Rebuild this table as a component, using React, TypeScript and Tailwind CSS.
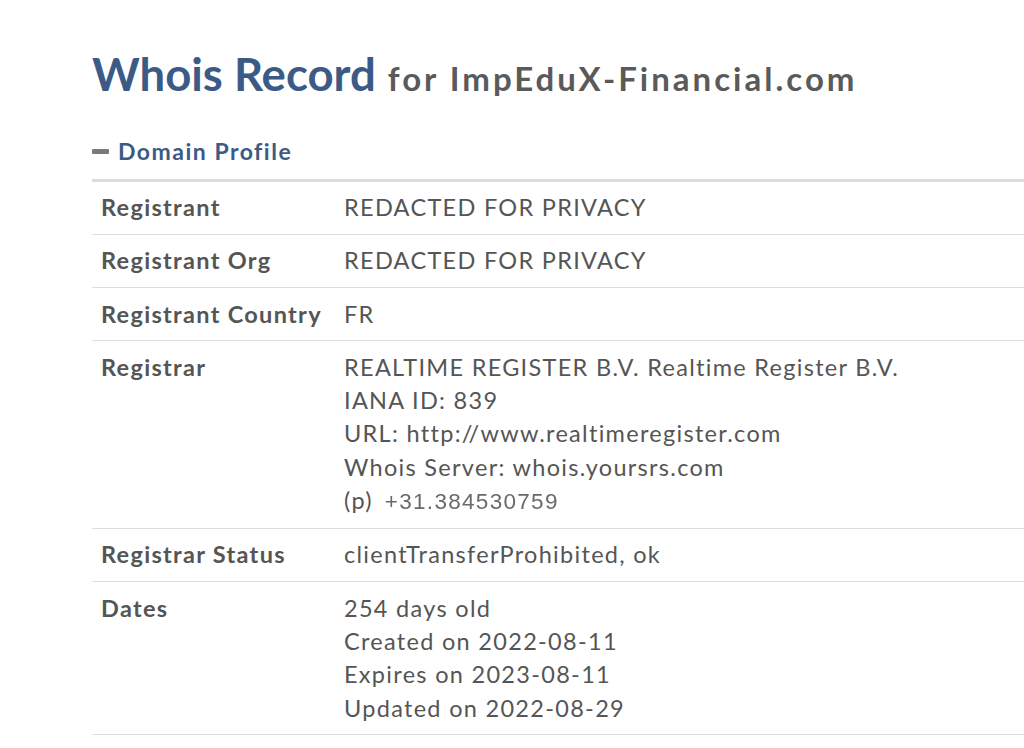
import React from "react";

const rows: { label: string; lines: React.ReactNode[] }[] = [
  { label: "Registrant", lines: ["REDACTED FOR PRIVACY"] },
  { label: "Registrant Org", lines: ["REDACTED FOR PRIVACY"] },
  { label: "Registrant Country", lines: ["FR"] },
  {
    label: "Registrar",
    lines: [
      "REALTIME REGISTER B.V. Realtime Register B.V.",
      "IANA ID: 839",
      "URL: http://www.realtimeregister.com",
      "Whois Server: whois.yoursrs.com",
      <span key="p" className="flex items-baseline">
        (p)
        <span className="ml-[12px] text-[22.5px] text-[#6a6a6a] [font-family:'Liberation_Sans',Arial,sans-serif] tracking-[1.3px] blur-[0.35px]">
          +31.384530759
        </span>
      </span>,
    ],
  },
  { label: "Registrar Status", lines: ["clientTransferProhibited, ok"] },
  {
    label: "Dates",
    lines: [
      "254 days old",
      "Created on 2022-08-11",
      "Expires on 2023-08-11",
      "Updated on 2022-08-29",
    ],
  },
];

export default function App() {
  return (
    <div className="min-h-[748px] w-[1024px] overflow-hidden bg-white [font-family:Lato,'Noto_Sans',sans-serif] text-[#555]">
      <div className="ml-[92px] w-[1000px] pt-[46px]">
        <h1 className="flex items-baseline whitespace-nowrap leading-[56px]">
          <span className="text-[45.5px] font-bold text-[#3b5b86]">Whois Record</span>
          <span className="ml-[12px] text-[33px] font-bold text-[#5a5a5a] tracking-[3px]">
            for ImpEduX-Financial.com
          </span>
        </h1>
        <div className="mt-[28px] flex items-center">
          <span className="h-[5px] w-[17px] rounded-[1px] bg-[#7a7a7a]" />
          <span className="ml-[9px] text-[23px] font-bold text-[#3b5b86] tracking-[1.5px]">
            Domain Profile
          </span>
        </div>
        <div className="mt-[10px] border-t-[3px] border-[#dcdcdc]">
          {rows.map((r) => (
            <div
              key={r.label}
              className="flex border-b border-[#dedede] py-[9.5px] text-[23.5px] leading-[33.3px] tracking-[1.3px]"
            >
              <div className="w-[252px] shrink-0 pl-[9px] font-bold">{r.label}</div>
              <div className="flex flex-col">
                {r.lines.map((l, i) => (
                  <div key={i}>{l}</div>
                ))}
              </div>
            </div>
          ))}
        </div>
      </div>
    </div>
  );
}
